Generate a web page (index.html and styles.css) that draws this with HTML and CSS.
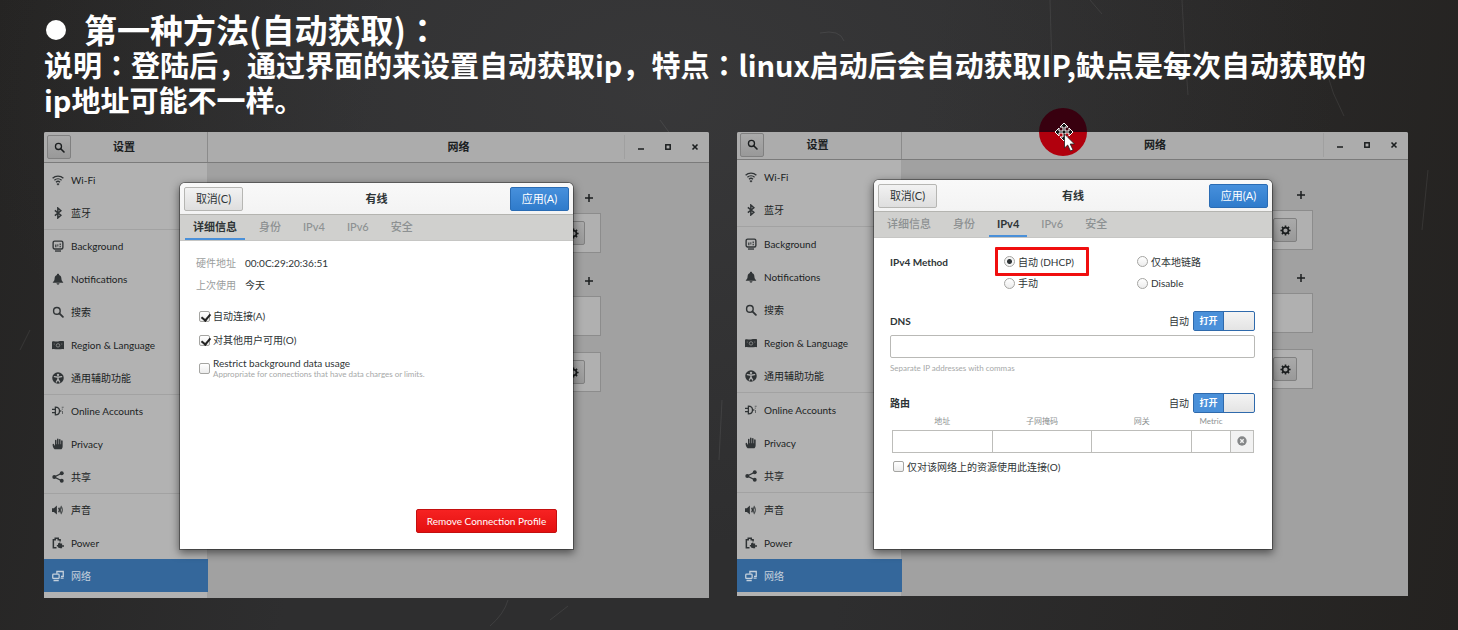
FILE: index.html
```
<!DOCTYPE html>
<html lang="zh-CN">
<head>
<meta charset="utf-8">
<title>自动获取 IP</title>
<link rel="stylesheet" href="styles.css">
</head>
<body>
<svg class="sprite" aria-hidden="true">
  <symbol id="i-search" viewBox="0 0 16 16"><circle cx="6.5" cy="6.5" r="4.4" fill="none" stroke="currentColor" stroke-width="1.900"/><path d="M9.8 9.8l4.7 4.7" stroke="currentColor" stroke-width="2.4" stroke-linecap="round"/></symbol>
  <symbol id="i-wifi" viewBox="0 0 16 16"><g fill="none" stroke="currentColor" stroke-width="1.7"><path d="M.8 5.6c4-3.8 10.400-3.8 14.400 0"/><path d="M3.200 8.300c2.700-2.500 6.900-2.500 9.600 0"/><path d="M5.300 10.900c1.500-1.400 3.900-1.400 5.400 0"/></g><path d="M6 13.200c1-1.200 3-1.200 4 0l-2 2.200z" fill="currentColor"/></symbol>
  <symbol id="i-bluetooth" viewBox="0 0 16 16"><path d="M3.800 4.500l8 6.500-4 3.600V1.400l4 3.600-8 6.500" fill="none" stroke="currentColor" stroke-width="2"/></symbol>
  <symbol id="i-background" viewBox="0 0 16 16"><rect x="1.500" y="1.500" width="13" height="10.500" rx="2" fill="none" stroke="currentColor" stroke-width="1.800"/><path d="M4 14.700h8" stroke="currentColor" stroke-width="1.800"/><path d="M4 6h2v3.500H4zM7 5.500h1.500v3H7zM10 4.500h2v2h-2zM10 7.500h2v2h-2z" fill="currentColor" fill-opacity=".8"/></symbol>
  <symbol id="i-bell" viewBox="0 0 16 16"><path d="M8 1c1 0 1.500.6 1.500 1.500C12 3.300 12.500 5.500 12.600 8c.1 2 .9 3 2.400 4.500V13H1v-.5C2.500 11 3.300 10 3.400 8c.1-2.500.6-4.700 3.100-5.500C6.500 1.600 7 1 8 1zM6 13.800h4c0 1-1 1.700-2 1.700s-2-.7-2-1.700z" fill="currentColor"/></symbol>
  <symbol id="i-region" viewBox="0 0 16 16"><path d="M0 3.500C3 2 5 4 8 3.300s5-.8 8-.3v10.500c-3-.8-5 .3-8 .3s-5-1-8-.3z" fill="currentColor"/><circle cx="8" cy="8.500" r="2.300" fill="none" stroke="#999" stroke-width="1"/><path d="M3 6v1.500M13 6v1.500" stroke="#888"/></symbol>
  <symbol id="i-access" viewBox="0 0 16 16"><circle cx="8" cy="8" r="7.700" fill="currentColor"/><circle cx="8" cy="3.800" r="1.600" fill="#b2b2b2"/><path d="M3.200 6.200L8 7l4.800-.8M8 6.500v3L5.800 13.300M8 9.500l2.200 3.800" fill="none" stroke="#b2b2b2" stroke-width="1.800" stroke-linecap="round"/></symbol>
  <symbol id="i-accounts" viewBox="0 0 16 16"><g fill="none" stroke="currentColor" stroke-width="1.700"><path d="M4.500 2.800c4 0 5.500 2 5.500 5.200s-1.500 5.200-5.500 5.200z"/><path d="M0 5.800h4.500M0 10.200h4.500"/><path d="M10 8h2.500"/></g><path d="M13 3h2.500M13 5.500h1.500M14 8v4" stroke="currentColor" stroke-width="1.200" stroke-opacity=".7"/></symbol>
  <symbol id="i-hand" viewBox="0 0 16 16"><path d="M3.500 15C1.500 13 .8 11 .8 8.500c0-1.300 1.900-1.300 2.100 0l.4 1.400h.7V3.200c0-1.300 2-1.300 2 0v5h.7V1.800c0-1.300 2-1.300 2 0v6.400h.7V2.200c0-1.300 2-1.300 2 0v6h.7V4c0-1.300 2.100-1.300 2.100 0v7c0 2-.7 3-1.700 4z" fill="currentColor"/></symbol>
  <symbol id="i-share" viewBox="0 0 16 16"><path d="M13 3L3 8l10 5" fill="none" stroke="currentColor" stroke-width="1.800"/><g fill="currentColor"><circle cx="13" cy="3" r="2.600"/><circle cx="3" cy="8" r="2.600"/><circle cx="13" cy="13" r="2.600"/></g></symbol>
  <symbol id="i-sound" viewBox="0 0 16 16"><path d="M0 5.500h2.500L6.500 2v12L2.500 10.500H0z" fill="currentColor"/><path d="M8.800 5c1.300 1.800 1.300 4.200 0 6" fill="none" stroke="currentColor" stroke-width="1.800"/><path d="M12.300 3.500c2 3 2 6 0 9-1.500-3-1.500-6 0-9z" fill="none" stroke="currentColor" stroke-width="1.500" stroke-opacity=".8"/></symbol>
  <symbol id="i-power" viewBox="0 0 16 16"><path d="M6 14.200H1.800V3.500h2.500V1.500h4v2h2.500V6" fill="none" stroke="currentColor" stroke-width="2"/><path d="M8 8.500l3-1.500v1.500h2.500V11H16v2h-2.500v2H11l-3-1v-1.500H6.500v-2H8z" fill="currentColor"/></symbol>
  <symbol id="i-network" viewBox="0 0 16 16"><g fill="none" stroke="currentColor" stroke-width="1.700"><path d="M6.500 5V2h8.500v6.500h-3"/><rect x="1" y="5.500" width="8.500" height="5.800" rx="1"/></g><path d="M2 13h7v2H2zM11.500 10h4v1.800h-4z" fill="currentColor"/></symbol>
  <symbol id="i-gear" viewBox="0 0 16 16"><circle cx="8" cy="8" r="4.300" fill="none" stroke="currentColor" stroke-width="2.500"/><g stroke="currentColor" stroke-width="2.300"><path d="M8 .6v2.600M8 12.800v2.600M.6 8h2.600M12.800 8h2.600M2.800 2.800l1.800 1.800M11.400 11.400l1.800 1.800M2.800 13.200l1.800-1.800M11.400 4.600l1.800-1.800"/></g></symbol>
  <symbol id="i-plus" viewBox="0 0 8 8"><path d="M4 0v8M0 4h8" stroke="currentColor" stroke-width="1.500"/></symbol>
  <symbol id="i-min" viewBox="0 0 8 8"><path d="M1 6h6" stroke="currentColor" stroke-width="1.500"/></symbol>
  <symbol id="i-max" viewBox="0 0 8 8"><rect x="1.800" y="1.800" width="4.400" height="4.400" fill="none" stroke="currentColor" stroke-width="1.500"/></symbol>
  <symbol id="i-close" viewBox="0 0 8 8"><path d="M1.500 1.500l5 5M6.500 1.500l-5 5" stroke="currentColor" stroke-width="1.600"/></symbol>
  <symbol id="i-remove" viewBox="0 0 16 16"><circle cx="8" cy="8" r="7.500" fill="currentColor"/><path d="M5.300 5.300l5.400 5.400M10.700 5.300l-5.400 5.400" stroke="#f2f2f2" stroke-width="2.200"/></symbol>
</svg>

<main class="slide">
  <svg class="chalk" viewBox="0 0 1458 630" preserveAspectRatio="none" aria-hidden="true">
    <g fill="none" stroke="#fff" stroke-opacity=".08">
      <path d="M1050 0l2 70M1182 0q2 45 6 95M1326 70q6 24 18 46M660 120l22 30M1090 0l12 14M820 33q20-4 24 8M508 600q-4 14-18 26M568 606l-18 14M1428 170l-6 60M722 400l-3 60M20 350l10-20"/>
    </g>
  </svg>

  <header class="intro">
    <h1><span class="bullet"></span>第一种方法(自动获取)<span class="colon" lang="zh-TW">：</span></h1>
    <p>说明<span class="colon" lang="zh-TW">：</span>登陆后，通过界面的来设置自动获取ip，特点<span class="colon" lang="zh-TW">：</span>linux启动后会自动获取IP,缺点是每次自动获取的<br>ip地址可能不一样。</p>
  </header>

  <div class="shots">
    <section class="window window-a">
      <div class="titlebar">
        <div class="side-head"><button class="tool" aria-label="搜索"><svg><use href="#i-search"/></svg></button><b>设置</b></div>
        <div class="main-head"><b>网络</b><div class="controls"><button aria-label="最小化"><svg><use href="#i-min"/></svg></button><button aria-label="最大化"><svg><use href="#i-max"/></svg></button><button aria-label="关闭"><svg><use href="#i-close"/></svg></button></div></div>
      </div>
      <div class="panes">
        <nav class="sidebar">
          <a href="#"><svg><use href="#i-wifi"/></svg>Wi-Fi</a>
          <a href="#"><svg><use href="#i-bluetooth"/></svg>蓝牙</a>
          <a href="#" class="group"><svg><use href="#i-background"/></svg>Background</a>
          <a href="#"><svg><use href="#i-bell"/></svg>Notifications</a>
          <a href="#"><svg><use href="#i-search"/></svg>搜索</a>
          <a href="#"><svg><use href="#i-region"/></svg>Region &amp; Language</a>
          <a href="#"><svg><use href="#i-access"/></svg>通用辅助功能</a>
          <a href="#" class="group"><svg><use href="#i-accounts"/></svg>Online Accounts</a>
          <a href="#"><svg><use href="#i-hand"/></svg>Privacy</a>
          <a href="#"><svg><use href="#i-share"/></svg>共享</a>
          <a href="#" class="group"><svg><use href="#i-sound"/></svg>声音</a>
          <a href="#"><svg><use href="#i-power"/></svg>Power</a>
          <a href="#" class="current"><svg><use href="#i-network"/></svg>网络</a>
        </nav>
        <div class="content">
          <div class="add"><button aria-label="添加"><svg><use href="#i-plus"/></svg></button></div>
          <div class="card"><button class="tool" aria-label="选项"><svg><use href="#i-gear"/></svg></button></div>
          <div class="add spaced"><button aria-label="添加"><svg><use href="#i-plus"/></svg></button></div>
          <div class="card"></div>
          <div class="card apart"><button class="tool" aria-label="选项"><svg><use href="#i-gear"/></svg></button></div>
        </div>
      </div>

      <div class="dialog" role="dialog" aria-label="有线">
        <div class="dialog-head"><button class="btn">取消(C)</button><b>有线</b><button class="btn primary">应用(A)</button></div>
        <div class="tabs" role="tablist"><button role="tab" class="active" aria-selected="true">详细信息</button><button role="tab">身份</button><button role="tab">IPv4</button><button role="tab">IPv6</button><button role="tab">安全</button></div>
        <div class="details">
          <dl><dt>硬件地址</dt><dd>00:0C:29:20:36:51</dd><dt>上次使用</dt><dd>今天</dd></dl>
          <div class="checks">
            <label><input type="checkbox" checked>自动连接(A)</label>
            <label><input type="checkbox" checked>对其他用户可用(O)</label>
            <label class="two"><input type="checkbox"><span>Restrict background data usage<small>Appropriate for connections that have data charges or limits.</small></span></label>
          </div>
          <button class="btn danger">Remove Connection Profile</button>
        </div>
      </div>
    </section>

    <section class="window window-b">
      <div class="titlebar">
        <div class="side-head"><button class="tool" aria-label="搜索"><svg><use href="#i-search"/></svg></button><b>设置</b></div>
        <div class="main-head"><b>网络</b><div class="controls"><button aria-label="最小化"><svg><use href="#i-min"/></svg></button><button aria-label="最大化"><svg><use href="#i-max"/></svg></button><button aria-label="关闭"><svg><use href="#i-close"/></svg></button></div></div>
      </div>
      <div class="panes">
        <nav class="sidebar">
          <a href="#"><svg><use href="#i-wifi"/></svg>Wi-Fi</a>
          <a href="#"><svg><use href="#i-bluetooth"/></svg>蓝牙</a>
          <a href="#" class="group"><svg><use href="#i-background"/></svg>Background</a>
          <a href="#"><svg><use href="#i-bell"/></svg>Notifications</a>
          <a href="#"><svg><use href="#i-search"/></svg>搜索</a>
          <a href="#"><svg><use href="#i-region"/></svg>Region &amp; Language</a>
          <a href="#"><svg><use href="#i-access"/></svg>通用辅助功能</a>
          <a href="#" class="group"><svg><use href="#i-accounts"/></svg>Online Accounts</a>
          <a href="#"><svg><use href="#i-hand"/></svg>Privacy</a>
          <a href="#"><svg><use href="#i-share"/></svg>共享</a>
          <a href="#" class="group"><svg><use href="#i-sound"/></svg>声音</a>
          <a href="#"><svg><use href="#i-power"/></svg>Power</a>
          <a href="#" class="current"><svg><use href="#i-network"/></svg>网络</a>
        </nav>
        <div class="content">
          <div class="add"><button aria-label="添加"><svg><use href="#i-plus"/></svg></button></div>
          <div class="card"><button class="tool" aria-label="选项"><svg><use href="#i-gear"/></svg></button></div>
          <div class="add spaced"><button aria-label="添加"><svg><use href="#i-plus"/></svg></button></div>
          <div class="card"></div>
          <div class="card apart"><button class="tool" aria-label="选项"><svg><use href="#i-gear"/></svg></button></div>
        </div>
      </div>

      <div class="dialog" role="dialog" aria-label="有线">
        <div class="dialog-head"><button class="btn">取消(C)</button><b>有线</b><button class="btn primary">应用(A)</button></div>
        <div class="tabs" role="tablist"><button role="tab">详细信息</button><button role="tab">身份</button><button role="tab" class="active" aria-selected="true">IPv4</button><button role="tab">IPv6</button><button role="tab">安全</button></div>
        <div class="ipv4">
          <div class="method">
            <b>IPv4 Method</b>
            <label class="marked"><input type="radio" name="method" checked>自动 (DHCP)</label>
            <label><input type="radio" name="method">仅本地链路</label>
            <label class="second"><input type="radio" name="method">手动</label>
            <label><input type="radio" name="method">Disable</label>
          </div>
          <div class="line dns"><b id="dns">DNS</b><span>自动</span><label class="switch"><input type="checkbox" role="switch" aria-label="DNS 自动" checked><span>打开</span></label></div>
          <input class="field" type="text" aria-labelledby="dns">
          <small class="hint">Separate IP addresses with commas</small>
          <div class="line"><b>路由</b><span>自动</span><label class="switch"><input type="checkbox" role="switch" aria-label="路由 自动" checked><span>打开</span></label></div>
          <table class="routes">
            <colgroup><col><col><col><col class="metric"><col class="del"></colgroup>
            <thead><tr><th>地址</th><th>子网掩码</th><th>网关</th><th>Metric</th><td></td></tr></thead>
            <tbody><tr><td><input type="text" aria-label="地址"></td><td><input type="text" aria-label="子网掩码"></td><td><input type="text" aria-label="网关"></td><td><input type="text" aria-label="Metric"></td><td class="remove"><button aria-label="删除"><svg><use href="#i-remove"/></svg></button></td></tr></tbody>
          </table>
          <label class="only"><input type="checkbox">仅对该网络上的资源使用此连接(O)</label>
        </div>
      </div>

      <svg class="pointer" viewBox="0 0 48 48" aria-hidden="true">
        <path d="M0 24a24 24 0 0 1 48 0z" fill="#38000f"/><path d="M0 24a24 24 0 0 0 48 0z" fill="#b1000d"/>
        <path d="M25 15l4 4h-3v4h4v-3l4 4-4 4v-3h-4v4h3l-4 4-4-4h3v-4h-4v3l-4-4 4-4v3h4v-4h-3z" fill="#111" stroke="#fff" stroke-width="1"/>
        <path d="M25.500 26v14l3.200-3 2.800 6 2.500-1.200-2.800-5.800h4.300z" fill="#fff" stroke="#222" stroke-width=".8"/>
      </svg>
    </section>
  </div>
</main>
</body>
</html>
```
FILE: styles.css
```
* { box-sizing: border-box; }

body {
  margin: 0;
  background: #2a2a2a;
  color: #2e3436;
  font: 10px/14px Lato, "Noto Sans CJK SC", sans-serif;
}

button, input { font: inherit; color: inherit; margin: 0; }
button { padding: 0; border: 0; background: none; }
svg { display: block; }
.sprite { display: none; }

.slide {
  position: relative;
  min-height: 100vh;
  padding: 12px 50px 32px 44px;
  background:
    radial-gradient(ellipse at 45% 15%, rgba(70, 70, 72, .4), transparent 60%),
    linear-gradient(100deg, #252423, #2e2e2f 25%, #2e2e2f 60%, #242220);
}
.chalk { position: absolute; inset: 0; width: 100%; height: 100%; }

.intro { position: relative; color: #fff; font-family: "Noto Sans CJK SC", "Noto Sans", sans-serif; font-weight: 700; }
.intro h1 {
  display: flex;
  align-items: center;
  margin: 0;
  font-size: 33px;
  line-height: 35px;
}
.intro p { margin: 0; font-size: 29px; line-height: 35px; white-space: nowrap; }
.bullet { width: 20px; height: 20px; margin: 0 18px 0 2px; border-radius: 50%; background: #fff; }
.colon { font-family: "Noto Sans CJK TC", sans-serif; }

.shots {
  display: grid;
  grid-template-columns: 665fr 671fr;
  gap: 28px;
  align-items: start;
  margin-top: 15px;
}

.window { position: relative; background: #a1a1a1; border-radius: 2px 2px 0 0; color: #1b1e1f; }
.titlebar {
  display: flex;
  background: #acacac;
  border-bottom: 1px solid #7b7b7b;
  border-radius: 2px 2px 0 0;
  font-size: 11px;
}
.window-a .titlebar { height: 31px; }
.window-b .titlebar { height: 28px; }
.window-b .side-head, .window-b .main-head { padding-bottom: 2px; }
.side-head {
  display: flex;
  align-items: center;
  flex: 0 0 164px;
  padding: 0 30px 0 3px;
  border-right: 1px solid #8b8b8b;
}
.side-head b { flex: 1; text-align: center; }
.tool {
  display: grid;
  place-items: center;
  width: 24px;
  height: 24px;
  border: 1px solid #808080;
  border-radius: 2px;
  background: linear-gradient(#aaa, #999);
}
.tool svg { width: 11px; height: 11px; }
.main-head { flex: 1; display: grid; grid-template-columns: 1fr auto 1fr; align-items: center; }
.main-head b { grid-column: 2; }
.controls { display: flex; justify-self: end; padding: 0 1px 0 2px; border-left: 1px solid #a0a0a0; }
.controls button { display: grid; place-items: center; width: 27px; height: 24px; }
.controls svg { width: 8px; height: 8px; }

.panes { display: flex; }
.sidebar { flex: 0 0 164px; padding-bottom: 6px; background: #b2b2b2; border-right: 1px solid #a0a0a0; }
.sidebar a {
  display: flex;
  align-items: center;
  gap: 7px;
  height: 33px;
  padding-left: 8px;
  color: inherit;
  text-decoration: none;
}
.sidebar svg { width: 12px; height: 12px; color: #303436; }
.sidebar .group { border-top: 1px solid #a2a2a2; }
.window-b .sidebar .group { height: 34px; }
.sidebar .current { background: #34679b; color: #c4d0dc; margin-right: -1px; }
.sidebar .current svg { color: #c4d0dc; }
.window-b .side-head, .window-b .sidebar { flex-basis: 165px; }
.window-b .sidebar { padding-bottom: 4px; }

.content { flex: 1; padding: 20px 108px 0; }
.window-b .content { padding: 20px 95px 0; }
.add { display: flex; justify-content: flex-end; align-items: center; height: 30px; padding-right: 8px; }
.add svg { width: 8px; height: 8px; }
.spaced { margin-top: 13px; }
.card {
  display: flex;
  justify-content: flex-end;
  align-items: center;
  height: 40px;
  padding-right: 15px;
  border: 1px solid #8c8c8c;
  background: #b0b0b0;
}
.apart { margin-top: 16px; }

.dialog {
  position: absolute;
  display: flex;
  flex-direction: column;
  border-radius: 5px 5px 0 0;
  background: #fff;
  color: #2e3436;
  box-shadow: 0 0 0 1px rgba(0, 0, 0, .35), 0 3px 9px 1px rgba(0, 0, 0, .5);
}
.window-a .dialog { left: 136px; right: 136px; top: 51px; bottom: 49px; }
.window-b .dialog { left: 137px; right: 136px; top: 48px; bottom: 47px; }
.dialog-head {
  display: flex;
  justify-content: space-between;
  align-items: center;
  height: 32px;
  padding: 0 4px;
  background: linear-gradient(#f9f9f9, #f3f3f3);
  border-bottom: 1px solid #b4b4b0;
  border-radius: 5px 5px 0 0;
  font-size: 11px;
}
.btn {
  width: 59px;
  height: 24px;
  border: 1px solid #b6b6b3;
  border-radius: 2px;
  background: linear-gradient(#f2f2f2, #dedede);
  font-size: 11px;
}
.primary { border-color: #2a6cb4; background: linear-gradient(#4790dc, #2f7bcb); color: #fff; }
.tabs { display: flex; gap: 6px; height: 26px; padding: 0 5px; background: #d0d0ce; border-bottom: 1px solid #c6c6c4; }
.tabs button {
  padding: 0 8px;
  border-bottom: 2px solid transparent;
  color: #8d9192;
  font-size: 11px;
  font-weight: 500;
}
.tabs .active { border-bottom-color: #4a90d9; color: #2e3436; font-weight: 700; }

.details { flex: 1; display: flex; flex-direction: column; padding: 11px 16px 16px; }
dl { display: grid; grid-template-columns: auto 1fr; gap: 0 9px; margin: 0; line-height: 22px; }
dt { color: #9a9d9d; }
dd { margin: 0; }
.checks { display: flex; flex-direction: column; gap: 2px; padding: 9px 3px 0; }
.checks label, .method label, .only { display: flex; align-items: center; gap: 3px; }
.checks label { height: 22px; }
.checks .two { height: 30px; }
.two span { line-height: 12px; }
small { display: block; color: #a6a8a8; font-size: 8px; line-height: 11px; }

input[type="checkbox"], input[type="radio"] {
  appearance: none;
  flex: none;
  width: 11px;
  height: 11px;
  border: 1px solid #a5a5a2;
  border-radius: 2px;
  background: linear-gradient(#fff, #ececec);
}
input[type="radio"] { border-radius: 50%; }
.checks input:checked { position: relative; }
.checks input:checked::after {
  content: "";
  position: absolute;
  left: 3px;
  top: 0;
  width: 4px;
  height: 7px;
  border: solid #222;
  border-width: 0 2px 2px 0;
  transform: rotate(40deg);
}
input[type="radio"]:checked { background: radial-gradient(circle, #2e3436 0 2px, #f6f6f6 3px); }

.danger {
  align-self: flex-end;
  width: 141px;
  margin-top: auto;
  border-color: #c40f0f;
  background: linear-gradient(#f62222, #e41010);
  color: #fff;
  font-size: 10px;
}

.ipv4 { padding: 9px 17px 0 16px; }
.method { display: grid; grid-template-columns: 105px 133px 1fr; align-items: center; }
.method label { padding-left: 9px; height: 20px; }
.method .marked {
  justify-self: start;
  width: 94px;
  height: 29px;
  padding-left: 6px;
  border: 3px solid #f00f0f;
  border-radius: 1px;
}
.method .second { grid-column: 2; }
.method .second, .method .second + label { height: 14px; }
.line { display: flex; align-items: center; gap: 4px; height: 20px; }
.line b { flex: 1; }
.dns { margin-top: 21px; }
.switch {
  position: relative;
  display: flex;
  width: 62px;
  height: 20px;
  border: 1px solid #2f6aac;
  border-radius: 2px;
  background: linear-gradient(#f4f4f4, #e4e4e4);
}
.switch input[type="checkbox"] { position: absolute; inset: 0; width: 100%; height: 100%; opacity: 0; }
.switch span {
  width: 50%;
  border-right: 1px solid #2f6aac;
  background: #4a90d9;
  color: #fff;
  font-size: 9px;
  font-weight: 700;
  line-height: 18px;
  text-align: center;
}
.field { display: block; width: 100%; height: 23px; margin-top: 4px; border: 1px solid #b9b9b6; border-radius: 2px; }
.hint { margin: 5px 0 19px; }

.routes { width: calc(100% - 3px); margin-left: 2px; border-collapse: collapse; table-layout: fixed; }
.routes .metric { width: 39px; }
.routes .del { width: 23px; }
.routes th { padding: 0; height: 17px; color: #8d9192; font-size: 8px; font-weight: 400; line-height: 16px; }
.routes thead td { padding: 0; }
.routes tbody td { height: 22px; padding: 0; border: 1px solid #bdbdba; }
.routes input { display: block; width: 100%; height: 21px; border: 0; background: none; }
.routes .remove { background: #f2f2f2; }
.remove button { display: block; margin: 0 auto; }
.remove svg { width: 10px; height: 10px; color: #858788; }
.only { margin: 7px 0 0 3px; }

.pointer { position: absolute; left: 302px; top: -24px; width: 48px; height: 48px; }
```
